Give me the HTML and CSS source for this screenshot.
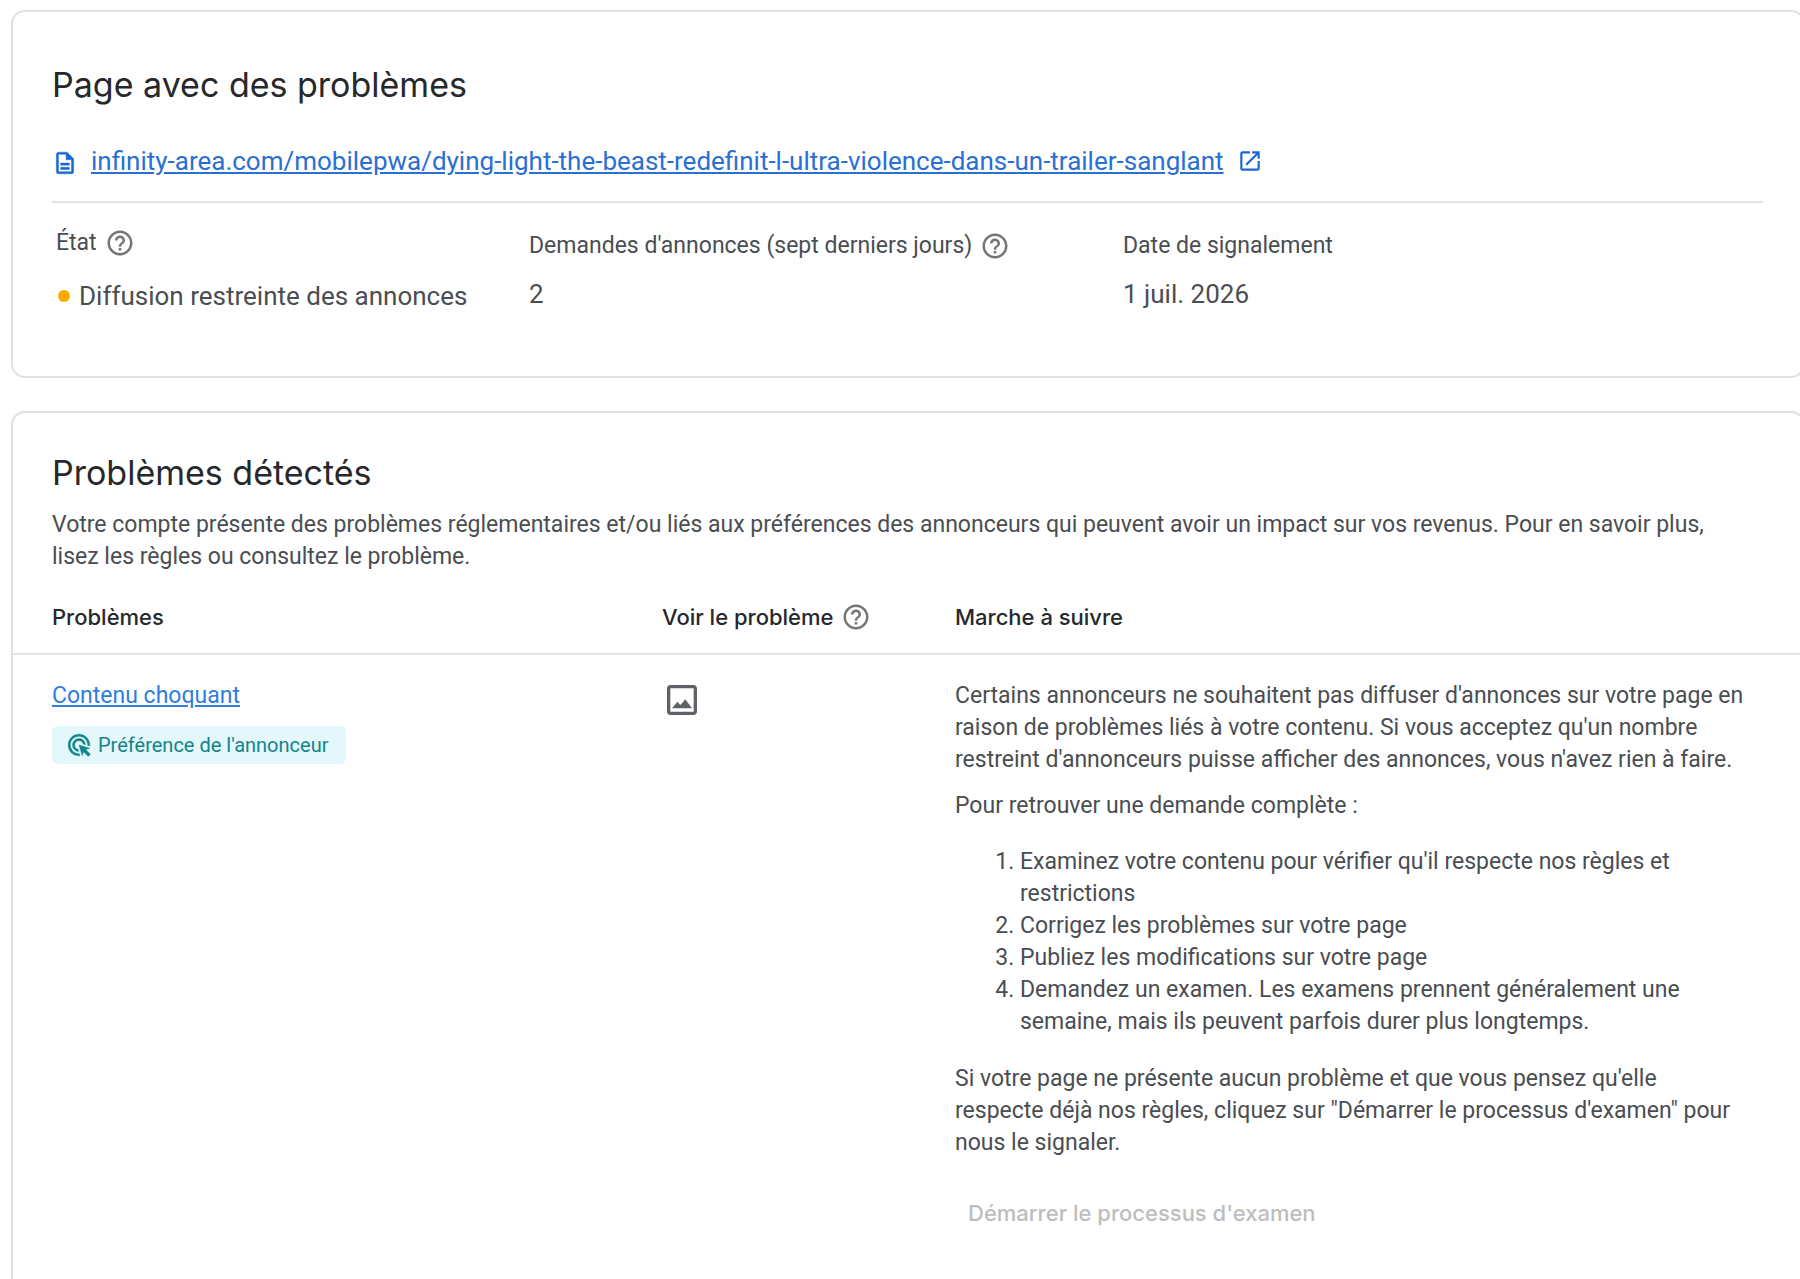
FILE: index.html
```html
<!DOCTYPE html>
<html lang="fr">
<head>
  <meta charset="UTF-8">
  <title>Page avec des problèmes</title>
  <meta name="viewport" content="width=device-width, initial-scale=1">
  <link rel="stylesheet" href="styles.css">
</head>
<body>
<svg class="sprite" aria-hidden="true">
  <symbol id="help" viewBox="0 0 24 24">
    <path d="M11 18h2v-2h-2v2zm1-16C6.48 2 2 6.48 2 12s4.48 10 10 10 10-4.48 10-10S17.52 2 12 2zm0 18c-4.41 0-8-3.59-8-8s3.59-8 8-8 8 3.59 8 8-3.59 8-8 8zm0-14c-2.21 0-4 1.79-4 4h2c0-1.1.9-2 2-2s2 .9 2 2c0 2-3 1.75-3 5h2c0-2.25 3-2.5 3-5 0-2.21-1.79-4-4-4z"/>
  </symbol>
</svg>
<main>
  <section class="card page-card">
    <h1>Page avec des problèmes</h1>
    <div class="page-url">
      <svg class="icon-doc" viewBox="0 0 24 24"><path d="M8 16h8v2H8zm0-4h8v2H8zm6-10H6c-1.1 0-2 .9-2 2v16c0 1.1.89 2 1.99 2H18c1.1 0 2-.9 2-2V8l-6-6zm4 18H6V4h7v5h5v11z"/></svg>
      <a href="#">infinity-area.com/mobilepwa/dying-light-the-beast-redefinit-l-ultra-violence-dans-un-trailer-sanglant</a>
      <svg class="icon-open" viewBox="0 0 24 24"><path d="M19 19H5V5h7V3H5c-1.11 0-2 .9-2 2v14c0 1.1.89 2 2 2h14c1.1 0 2-.9 2-2v-7h-2v7zM14 3v2h3.59l-9.83 9.83 1.41 1.41L19 6.41V10h2V3h-7z"/></svg>
    </div>
    <div class="stats">
      <div class="stat stat-state">
        <div class="label">État <button class="help" aria-label="Aide"><svg><use href="#help"/></svg></button></div>
        <div class="value"><span class="dot"></span>Diffusion restreinte des annonces</div>
      </div>
      <div class="stat">
        <div class="label">Demandes d'annonces (sept derniers jours) <button class="help" aria-label="Aide"><svg><use href="#help"/></svg></button></div>
        <div class="value">2</div>
      </div>
      <div class="stat">
        <div class="label">Date de signalement</div>
        <div class="value">1 juil. 2026</div>
      </div>
    </div>
  </section>

  <section class="card issues-card">
    <h2>Problèmes détectés</h2>
    <p class="intro">Votre compte présente des problèmes réglementaires et/ou liés aux préférences des annonceurs qui peuvent avoir un impact sur vos revenus. Pour en savoir plus, lisez les règles ou consultez le problème.</p>
    <table>
      <thead>
        <tr>
          <th class="col-issue">Problèmes</th>
          <th class="col-view"><div class="th-help">Voir le problème <button class="help" aria-label="Aide"><svg><use href="#help"/></svg></button></div></th>
          <th>Marche à suivre</th>
        </tr>
      </thead>
      <tbody>
        <tr>
          <td>
            <a class="issue-link" href="#">Contenu choquant</a>
            <div class="badge">
              <svg viewBox="0 0 24 24"><path d="M11.71 17.99A5.993 5.993 0 0 1 6 12c0-3.31 2.69-6 6-6 3.22 0 5.84 2.53 5.99 5.71l-2.1-.63a3.999 3.999 0 1 0-4.81 4.81l.63 2.1zM22 12c0 .3-.01.6-.04.9l-1.97-.59c.01-.1.01-.21.01-.31 0-4.42-3.58-8-8-8s-8 3.58-8 8 3.58 8 8 8c.1 0 .21 0 .31-.01l.59 1.97c-.3.03-.6.04-.9.04-5.52 0-10-4.48-10-10S6.48 2 12 2s10 4.48 10 10zm-3.77 4.26L22 15l-10-3 3 10 1.26-3.77 4.27 4.27 1.98-1.98-4.28-4.26z"/></svg>
              Préférence de l'annonceur
            </div>
          </td>
          <td>
            <button class="view-btn" aria-label="Voir le problème"><svg viewBox="0 0 24 24"><path d="M19 5v14H5V5h14m0-2H5c-1.1 0-2 .9-2 2v14c0 1.1.9 2 2 2h14c1.1 0 2-.9 2-2V5c0-1.1-.9-2-2-2zM6 17l3.2-4 1.8 2 3-3.4L18 17z"/></svg></button>
          </td>
          <td class="steps">
            <p>Certains annonceurs ne souhaitent pas diffuser d'annonces sur votre page en raison de problèmes liés à votre contenu. Si vous acceptez qu'un nombre restreint d'annonceurs puisse afficher des annonces, vous n'avez rien à faire.</p>
            <p>Pour retrouver une demande complète :</p>
            <ol>
              <li>Examinez votre contenu pour vérifier qu'il respecte nos règles et restrictions</li>
              <li>Corrigez les problèmes sur votre page</li>
              <li>Publiez les modifications sur votre page</li>
              <li>Demandez un examen. Les examens prennent généralement une semaine, mais ils peuvent parfois durer plus longtemps.</li>
            </ol>
            <p>Si votre page ne présente aucun problème et que vous pensez qu'elle respecte déjà nos règles, cliquez sur "Démarrer le processus d'examen" pour nous le signaler.</p>
            <button class="start-btn" disabled>Démarrer le processus d'examen</button>
          </td>
        </tr>
      </tbody>
    </table>
  </section>
</main>
</body>
</html>
```
FILE: styles.css
```css
* { box-sizing: border-box; }
body {
  margin: 0;
  background: #fff;
  color: #4a4d51;
  font-family: Roboto, sans-serif;
  font-size: 23px;
  line-height: 32px;
  overflow: hidden;
}
.sprite {
  display: none;
}
main {
  display: flex;
  flex-direction: column;
  gap: 33px;
  height: 100vh;
  padding: 10px 0 0 11px;
  margin-right: -5px;
  overflow: hidden;
}
button {
  background: none;
  border: none;
  padding: 0;
  font: inherit;
}
svg {
  display: block;
  fill: currentColor;
}
a {
  color: #2a6fd3;
  text-decoration: underline;
}
.card {
  flex: none;
  border: 2px solid #e0e1e3;
  border-radius: 14px;
}
h1, h2 {
  margin: 0;
  color: #26282b;
  font-family: "Google Sans", Inter, sans-serif;
  font-size: 34px;
  line-height: 44px;
  font-weight: 400;
}
.page-card {
  padding: 51px 40px 64px 39px;
}
.page-url {
  display: flex;
  align-items: center;
  margin-top: 38px;
  padding-bottom: 24px;
  border-bottom: 2px solid #e3e3e3;
  font-size: 26px;
  color: #1967d2;
}
.icon-doc {
  width: 26px;
  height: 26px;
  margin: 4px 13px 0 0;
  stroke: currentColor;
  stroke-width: .4;
}
.icon-open {
  width: 26px;
  height: 26px;
  margin-left: 13px;
}
.stats {
  display: grid;
  grid-template-columns: 473px 594px 1fr;
  padding: 22px 0 0 4px;
}
.stat {
  padding-top: 3px;
}
.stat-state {
  padding-top: 0;
}
.label {
  display: flex;
  align-items: center;
  gap: 8px;
  height: 36px;
}
.value {
  display: flex;
  align-items: center;
  margin-top: 14px;
  font-size: 26px;
}
.stat-state .value {
  margin-top: 19px;
}
.dot {
  width: 12px;
  height: 12px;
  margin: 0 9px 0 2px;
  border-radius: 50%;
  background: #f9ab00;
}
.help {
  color: #757575;
}
.help svg {
  width: 30px;
  height: 30px;
}
.issues-card {
  padding-top: 38px;
}
.issues-card h2, .intro {
  padding: 0 56px 0 39px;
}
.intro {
  margin: 14px 0 0;
}
table {
  width: 100%;
  margin-top: 8px;
  border-collapse: collapse;
  table-layout: fixed;
}
.col-issue {
  width: 649px;
}
.col-view {
  width: 293px;
}
th {
  height: 73px;
  padding: 0;
  border-bottom: 2px solid #e3e3e3;
  color: #26282b;
  font-family: "Google Sans", Inter, sans-serif;
  font-size: 22px;
  font-weight: 500;
  text-align: left;
}
.th-help {
  display: flex;
  align-items: center;
  gap: 8px;
}
td {
  padding: 25px 0 80px;
  vertical-align: top;
}
th:first-child, td:first-child {
  padding-left: 39px;
}
td:last-child {
  padding-right: 56px;
}
.issue-link {
  color: #2f7de1;
}
.badge {
  display: flex;
  align-items: center;
  gap: 6px;
  width: max-content;
  height: 38px;
  margin-top: 14px;
  padding: 0 18px 0 14px;
  border-radius: 6px;
  background: #e4f7fb;
  color: #12858a;
  font-size: 20px;
}
.badge svg {
  width: 26px;
  height: 26px;
  stroke: currentColor;
  stroke-width: .4;
}
.view-btn {
  display: block;
  color: #5f6368;
}
.view-btn svg {
  width: 40px;
  height: 40px;
}
.steps p {
  margin: 0 0 14px;
}
.steps ol {
  margin: 24px 0 25px;
  padding-left: 65px;
}
.start-btn {
  margin-top: 24px;
  padding: 0 13px;
  color: #bdbdbd;
  font-family: "Google Sans", Inter, sans-serif;
  font-size: 22px;
  font-weight: 500;
}
```
